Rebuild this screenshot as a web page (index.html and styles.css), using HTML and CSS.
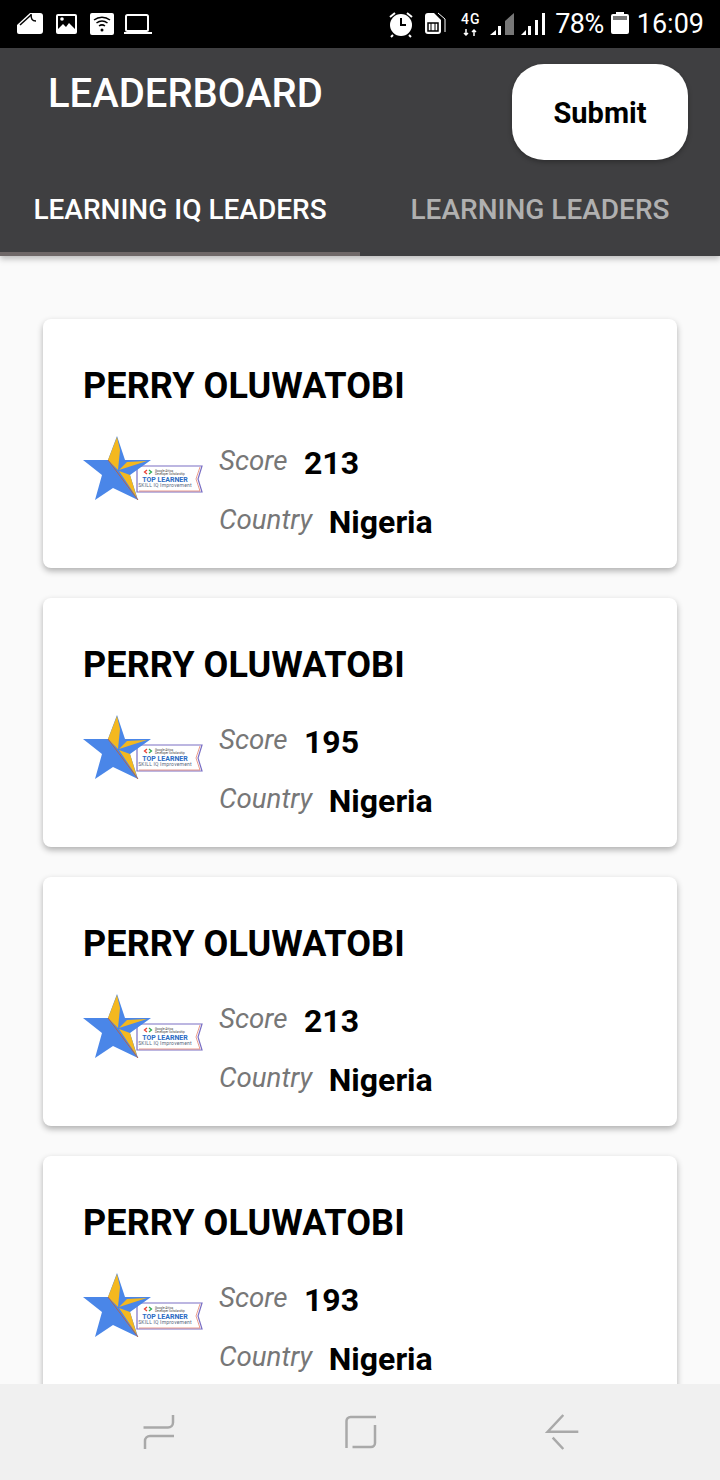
FILE: index.html
```html
<!DOCTYPE html>
<html>
<head>
<meta charset="utf-8">
<link rel="stylesheet" href="styles.css">
<title>Leaderboard</title>
</head>
<body>

<div class="status">
  <svg class="status-left" width="136" height="32" viewBox="0 0 136 32">
    <path d="M13 5h10a3 3 0 0 1 3 3v15a3 3 0 0 1-3 3H2a2 2 0 0 1-2-2V17z" fill="#fff"/>
    <path d="M3 17L14 7" stroke="#000" stroke-width="1.500"/>
    <path d="M14 6c0 5 1 7 5 7" fill="none" stroke="#000" stroke-width="1.500"/>
    <rect x="39" y="6" width="21" height="20" rx="2" fill="#fff"/>
    <rect x="41" y="8" width="17" height="14" fill="#000"/>
    <circle cx="45" cy="11" r="1.800" fill="#fff"/>
    <path d="M41 21l5-5 3 3 3-4 6 6v1H41z" fill="#fff"/>
    <rect x="73" y="5" width="24" height="22" rx="2" fill="#fff"/>
    <path d="M77 12a13 13 0 0 1 16 0M79.500 15a9 9 0 0 1 11 0M82 18a5 5 0 0 1 6 0" fill="none" stroke="#000" stroke-width="1.500"/>
    <circle cx="85" cy="22" r="1.500" fill="#000"/>
    <rect x="109" y="7" width="22" height="16" rx="1.500" fill="none" stroke="#fff" stroke-width="2"/>
    <rect x="107" y="24" width="28" height="2" fill="#fff"/>
  </svg>
  <div class="status-right">
    <svg width="157" height="32" viewBox="0 0 157 32">
      <circle cx="13" cy="17" r="11" fill="#fff"/>
      <path d="M13 10v7h5" fill="none" stroke="#000" stroke-width="2"/>
      <path d="M2 9l5-4M24 9l-5-4M5 27l-2 2M21 27l2 2" stroke="#fff" stroke-width="2"/>
      <path d="M37 8a3 3 0 0 1 3-3h6l7 7v11a3 3 0 0 1-3 3H40a3 3 0 0 1-3-3z" fill="#fff"/>
      <path d="M50 5l7 6v13" fill="none" stroke="#fff" stroke-width="1"/>
      <rect x="40" y="15" width="10" height="8" fill="none" stroke="#000" stroke-width="1.500"/>
      <path d="M43 15v8M47 15v8" stroke="#000" stroke-width="1"/>
      <text x="73" y="16" class="status-4g">4G</text>
      <path d="M78 21v6M76 25l2 2 2-2M86 28v-6M84 24l2-2 2 2" fill="none" stroke="#fff" stroke-width="1.500"/>
      <polygon points="102,27 108,22 108,27" fill="#fff"/>
      <rect x="110" y="18" width="3" height="9" fill="#fff"/>
      <polygon points="117,13 126,5 126,27 117,27" fill="#777"/>
      <polygon points="133,27 138,22 138,27" fill="#fff"/>
      <rect x="140" y="18" width="3" height="9" fill="#fff"/>
      <rect x="147" y="12" width="3" height="15" fill="#fff"/>
      <rect x="154" y="5" width="3" height="22" fill="#fff"/>
    </svg>
    <span class="status-pct">78%</span>
    <svg width="18" height="32" viewBox="0 0 18 32">
      <path d="M5 4h8v2h3a2 2 0 0 1 2 2v16a2 2 0 0 1-2 2H2a2 2 0 0 1-2-2V8a2 2 0 0 1 2-2h3z" fill="#fff"/>
      <rect x="2" y="8" width="14" height="4" fill="#777"/>
    </svg>
    <span class="status-time">16:09</span>
  </div>
</div>

<header class="appbar">
  <div class="appbar-top">
    <div class="title">LEADERBOARD</div>
    <button class="submit">Submit</button>
  </div>
  <div class="tabs">
    <div class="tab active">LEARNING IQ LEADERS</div>
    <div class="tab">LEARNING LEADERS</div>
  </div>
</header>

<main class="list">
  <div class="card">
    <div class="name">PERRY OLUWATOBI</div>
    <div class="card-body">
      <svg class="badge" viewBox="0 0 120 64">
        <polygon points="54,30 119,30 115,43 119,56 54,56" fill="#fff" stroke="#7a6fc4" stroke-width="1.200"/>
        <polyline points="117,31 113,43 117,55 56,55" fill="none" stroke="#e2725b" stroke-width=".7"/>
        <polygon points="34,0 42,24 68,24 47,39 55,64 30,52 12,64 19,39 0,24 25,24" fill="#4a86e8"/>
        <polygon points="34,1 25,24 35,34 37,14" fill="#f4b81f"/>
        <polygon points="44,26 64,25 36,34" fill="#f4b81f"/>
        <polygon points="36,35 47,39 54,62" fill="#f4b81f"/>
        <polyline points="25,24 55,64" fill="none" stroke="#b5654a" stroke-width="1"/>
        <path d="M64 34l-2.500 2 2.500 2" fill="none" stroke="#ea4335" stroke-width="1.300"/>
        <path d="M66 34l2.500 2-2.500 2" fill="none" stroke="#34a853" stroke-width="1.300"/>
        <text x="72" y="35.500" class="badge-tiny">Google Africa</text>
        <text x="72" y="39" class="badge-tiny">Developer Scholarship</text>
        <text x="82" y="46" class="badge-top">TOP LEARNER</text>
        <text x="82" y="51" class="badge-sub">SKILL IQ Improvement</text>
      </svg>
      <div class="details">
        <div class="row"><span class="label">Score</span><span class="value">213</span></div>
        <div class="row"><span class="label">Country</span><span class="value">Nigeria</span></div>
      </div>
    </div>
  </div>
  <div class="card">
    <div class="name">PERRY OLUWATOBI</div>
    <div class="card-body">
      <svg class="badge" viewBox="0 0 120 64">
        <polygon points="54,30 119,30 115,43 119,56 54,56" fill="#fff" stroke="#7a6fc4" stroke-width="1.200"/>
        <polyline points="117,31 113,43 117,55 56,55" fill="none" stroke="#e2725b" stroke-width=".7"/>
        <polygon points="34,0 42,24 68,24 47,39 55,64 30,52 12,64 19,39 0,24 25,24" fill="#4a86e8"/>
        <polygon points="34,1 25,24 35,34 37,14" fill="#f4b81f"/>
        <polygon points="44,26 64,25 36,34" fill="#f4b81f"/>
        <polygon points="36,35 47,39 54,62" fill="#f4b81f"/>
        <polyline points="25,24 55,64" fill="none" stroke="#b5654a" stroke-width="1"/>
        <path d="M64 34l-2.500 2 2.500 2" fill="none" stroke="#ea4335" stroke-width="1.300"/>
        <path d="M66 34l2.500 2-2.500 2" fill="none" stroke="#34a853" stroke-width="1.300"/>
        <text x="72" y="35.500" class="badge-tiny">Google Africa</text>
        <text x="72" y="39" class="badge-tiny">Developer Scholarship</text>
        <text x="82" y="46" class="badge-top">TOP LEARNER</text>
        <text x="82" y="51" class="badge-sub">SKILL IQ Improvement</text>
      </svg>
      <div class="details">
        <div class="row"><span class="label">Score</span><span class="value">195</span></div>
        <div class="row"><span class="label">Country</span><span class="value">Nigeria</span></div>
      </div>
    </div>
  </div>
  <div class="card">
    <div class="name">PERRY OLUWATOBI</div>
    <div class="card-body">
      <svg class="badge" viewBox="0 0 120 64">
        <polygon points="54,30 119,30 115,43 119,56 54,56" fill="#fff" stroke="#7a6fc4" stroke-width="1.200"/>
        <polyline points="117,31 113,43 117,55 56,55" fill="none" stroke="#e2725b" stroke-width=".7"/>
        <polygon points="34,0 42,24 68,24 47,39 55,64 30,52 12,64 19,39 0,24 25,24" fill="#4a86e8"/>
        <polygon points="34,1 25,24 35,34 37,14" fill="#f4b81f"/>
        <polygon points="44,26 64,25 36,34" fill="#f4b81f"/>
        <polygon points="36,35 47,39 54,62" fill="#f4b81f"/>
        <polyline points="25,24 55,64" fill="none" stroke="#b5654a" stroke-width="1"/>
        <path d="M64 34l-2.500 2 2.500 2" fill="none" stroke="#ea4335" stroke-width="1.300"/>
        <path d="M66 34l2.500 2-2.500 2" fill="none" stroke="#34a853" stroke-width="1.300"/>
        <text x="72" y="35.500" class="badge-tiny">Google Africa</text>
        <text x="72" y="39" class="badge-tiny">Developer Scholarship</text>
        <text x="82" y="46" class="badge-top">TOP LEARNER</text>
        <text x="82" y="51" class="badge-sub">SKILL IQ Improvement</text>
      </svg>
      <div class="details">
        <div class="row"><span class="label">Score</span><span class="value">213</span></div>
        <div class="row"><span class="label">Country</span><span class="value">Nigeria</span></div>
      </div>
    </div>
  </div>
  <div class="card">
    <div class="name">PERRY OLUWATOBI</div>
    <div class="card-body">
      <svg class="badge" viewBox="0 0 120 64">
        <polygon points="54,30 119,30 115,43 119,56 54,56" fill="#fff" stroke="#7a6fc4" stroke-width="1.200"/>
        <polyline points="117,31 113,43 117,55 56,55" fill="none" stroke="#e2725b" stroke-width=".7"/>
        <polygon points="34,0 42,24 68,24 47,39 55,64 30,52 12,64 19,39 0,24 25,24" fill="#4a86e8"/>
        <polygon points="34,1 25,24 35,34 37,14" fill="#f4b81f"/>
        <polygon points="44,26 64,25 36,34" fill="#f4b81f"/>
        <polygon points="36,35 47,39 54,62" fill="#f4b81f"/>
        <polyline points="25,24 55,64" fill="none" stroke="#b5654a" stroke-width="1"/>
        <path d="M64 34l-2.500 2 2.500 2" fill="none" stroke="#ea4335" stroke-width="1.300"/>
        <path d="M66 34l2.500 2-2.500 2" fill="none" stroke="#34a853" stroke-width="1.300"/>
        <text x="72" y="35.500" class="badge-tiny">Google Africa</text>
        <text x="72" y="39" class="badge-tiny">Developer Scholarship</text>
        <text x="82" y="46" class="badge-top">TOP LEARNER</text>
        <text x="82" y="51" class="badge-sub">SKILL IQ Improvement</text>
      </svg>
      <div class="details">
        <div class="row"><span class="label">Score</span><span class="value">193</span></div>
        <div class="row"><span class="label">Country</span><span class="value">Nigeria</span></div>
      </div>
    </div>
  </div>
</main>

<nav class="navbar">
  <svg class="nav-icon" viewBox="0 0 36 36"><path d="M2.500 13.500H27a5 5 0 0 0 5-5V1M33 22H9a5 5 0 0 0-5 5v8"/></svg>
  <svg class="nav-icon" viewBox="0 0 36 36"><path d="M4.500 34V7a4 4 0 0 1 4-4H34M33 11v18a4 4 0 0 1-4 4H10.500"/></svg>
  <svg class="nav-icon nav-back" viewBox="0 0 36 36"><path d="M19.300 1L3.700 17.700H34.300M8.700 23.700L19.300 35"/></svg>
</nav>
</body>
</html>
```

FILE: styles.css
```css
html, body {
	margin: 0;
	padding: 0;
}
body {
	width: 720px;
	height: 1480px;
	display: flex;
	flex-direction: column;
	overflow: hidden;
	font-family: Roboto, "Liberation Sans", sans-serif;
	background-color: #FAFAFA;
}

.status {
	height: 48px;
	flex: none;
	display: flex;
	align-items: center;
	justify-content: space-between;
	padding: 0 16px 0 17px;
	background-color: #000;
	color: white;
}
.status-left {
	display: block;
}
.status-right {
	display: flex;
	align-items: center;
}
.status-right svg {
	display: block;
}
.status-pct {
	font-size: 27px;
	letter-spacing: -0.5px;
	margin: 0 7px 0 10px;
}
.status-time {
	font-size: 27px;
	margin-left: 8px;
}
.status-4g {
	font: 500 14px Roboto, sans-serif;
	letter-spacing: 1px;
	fill: #fff;
}

.appbar {
	flex: none;
	position: relative;
	z-index: 1;
	background-color: #3F3F41;
	box-shadow: 0 3px 6px rgba(0, 0, 0, 0.25);
}
.appbar-top {
	height: 112px;
	display: flex;
	justify-content: space-between;
	padding: 0 32px 0 48px;
}
.title {
	font-size: 40px;
	font-weight: 500;
	line-height: 44px;
	padding-top: 24px;
	color: white;
}
.submit {
	width: 176px;
	height: 96px;
	margin-top: 16px;
	padding: 2px 0 0;
	border: 0;
	border-radius: 32px;
	background-color: white;
	color: black;
	font-family: Roboto, sans-serif;
	font-size: 29px;
	font-weight: bold;
	box-shadow: 0 2px 5px rgba(0, 0, 0, 0.3);
}
.tabs {
	display: flex;
	height: 96px;
}
.tab {
	width: 360px;
	box-sizing: border-box;
	text-align: center;
	font-size: 28px;
	font-weight: 500;
	line-height: 100px;
	color: #B0B0B0;
}
.tab.active {
	color: white;
	border-bottom: 4px solid #6F6868;
}

.list {
	flex: 1;
	min-height: 0;
	overflow: hidden;
	display: flex;
	flex-direction: column;
	gap: 30px;
	padding: 63px 43px 0;
}
.card {
	flex: none;
	padding: 40px 40px 17px;
	background-color: white;
	border-radius: 8px;
	box-shadow: 0 3px 6px rgba(0, 0, 0, 0.3);
}
.name {
	font-size: 36px;
	font-weight: bold;
	line-height: 54px;
	letter-spacing: 0.1px;
	color: black;
}
.card-body {
	display: flex;
	margin-top: 20px;
}
.badge {
	flex: none;
	width: 120px;
	height: 64px;
	margin-top: 3px;
}
.badge-tiny {
	font: 3px Roboto, sans-serif;
	fill: #444;
}
.badge-top {
	font: bold 7px Roboto, sans-serif;
	fill: #2b6cc4;
	text-anchor: middle;
}
.badge-sub {
	font: 5px Roboto, sans-serif;
	letter-spacing: 0.2px;
	fill: #5a6a80;
	text-anchor: middle;
}
.details {
	margin-left: 16px;
}
.row {
	height: 59px;
	display: flex;
	align-items: center;
	gap: 16.5px;
}
.label {
	font-size: 27.7px;
	font-style: italic;
	margin-bottom: 4px;
	color: #777;
}
.value {
	font-size: 32px;
	font-weight: bold;
	color: black;
}

.navbar {
	position: relative;
	z-index: 1;
	flex: none;
	height: 96px;
	display: flex;
	align-items: center;
	justify-content: center;
	gap: 165px;
	background-color: #F0F0F0;
}
.nav-icon {
	width: 36px;
	height: 36px;
	fill: none;
	stroke: #A9A9A9;
	stroke-width: 2.5;
}
.nav-back {
	margin-left: 1px;
}
```
